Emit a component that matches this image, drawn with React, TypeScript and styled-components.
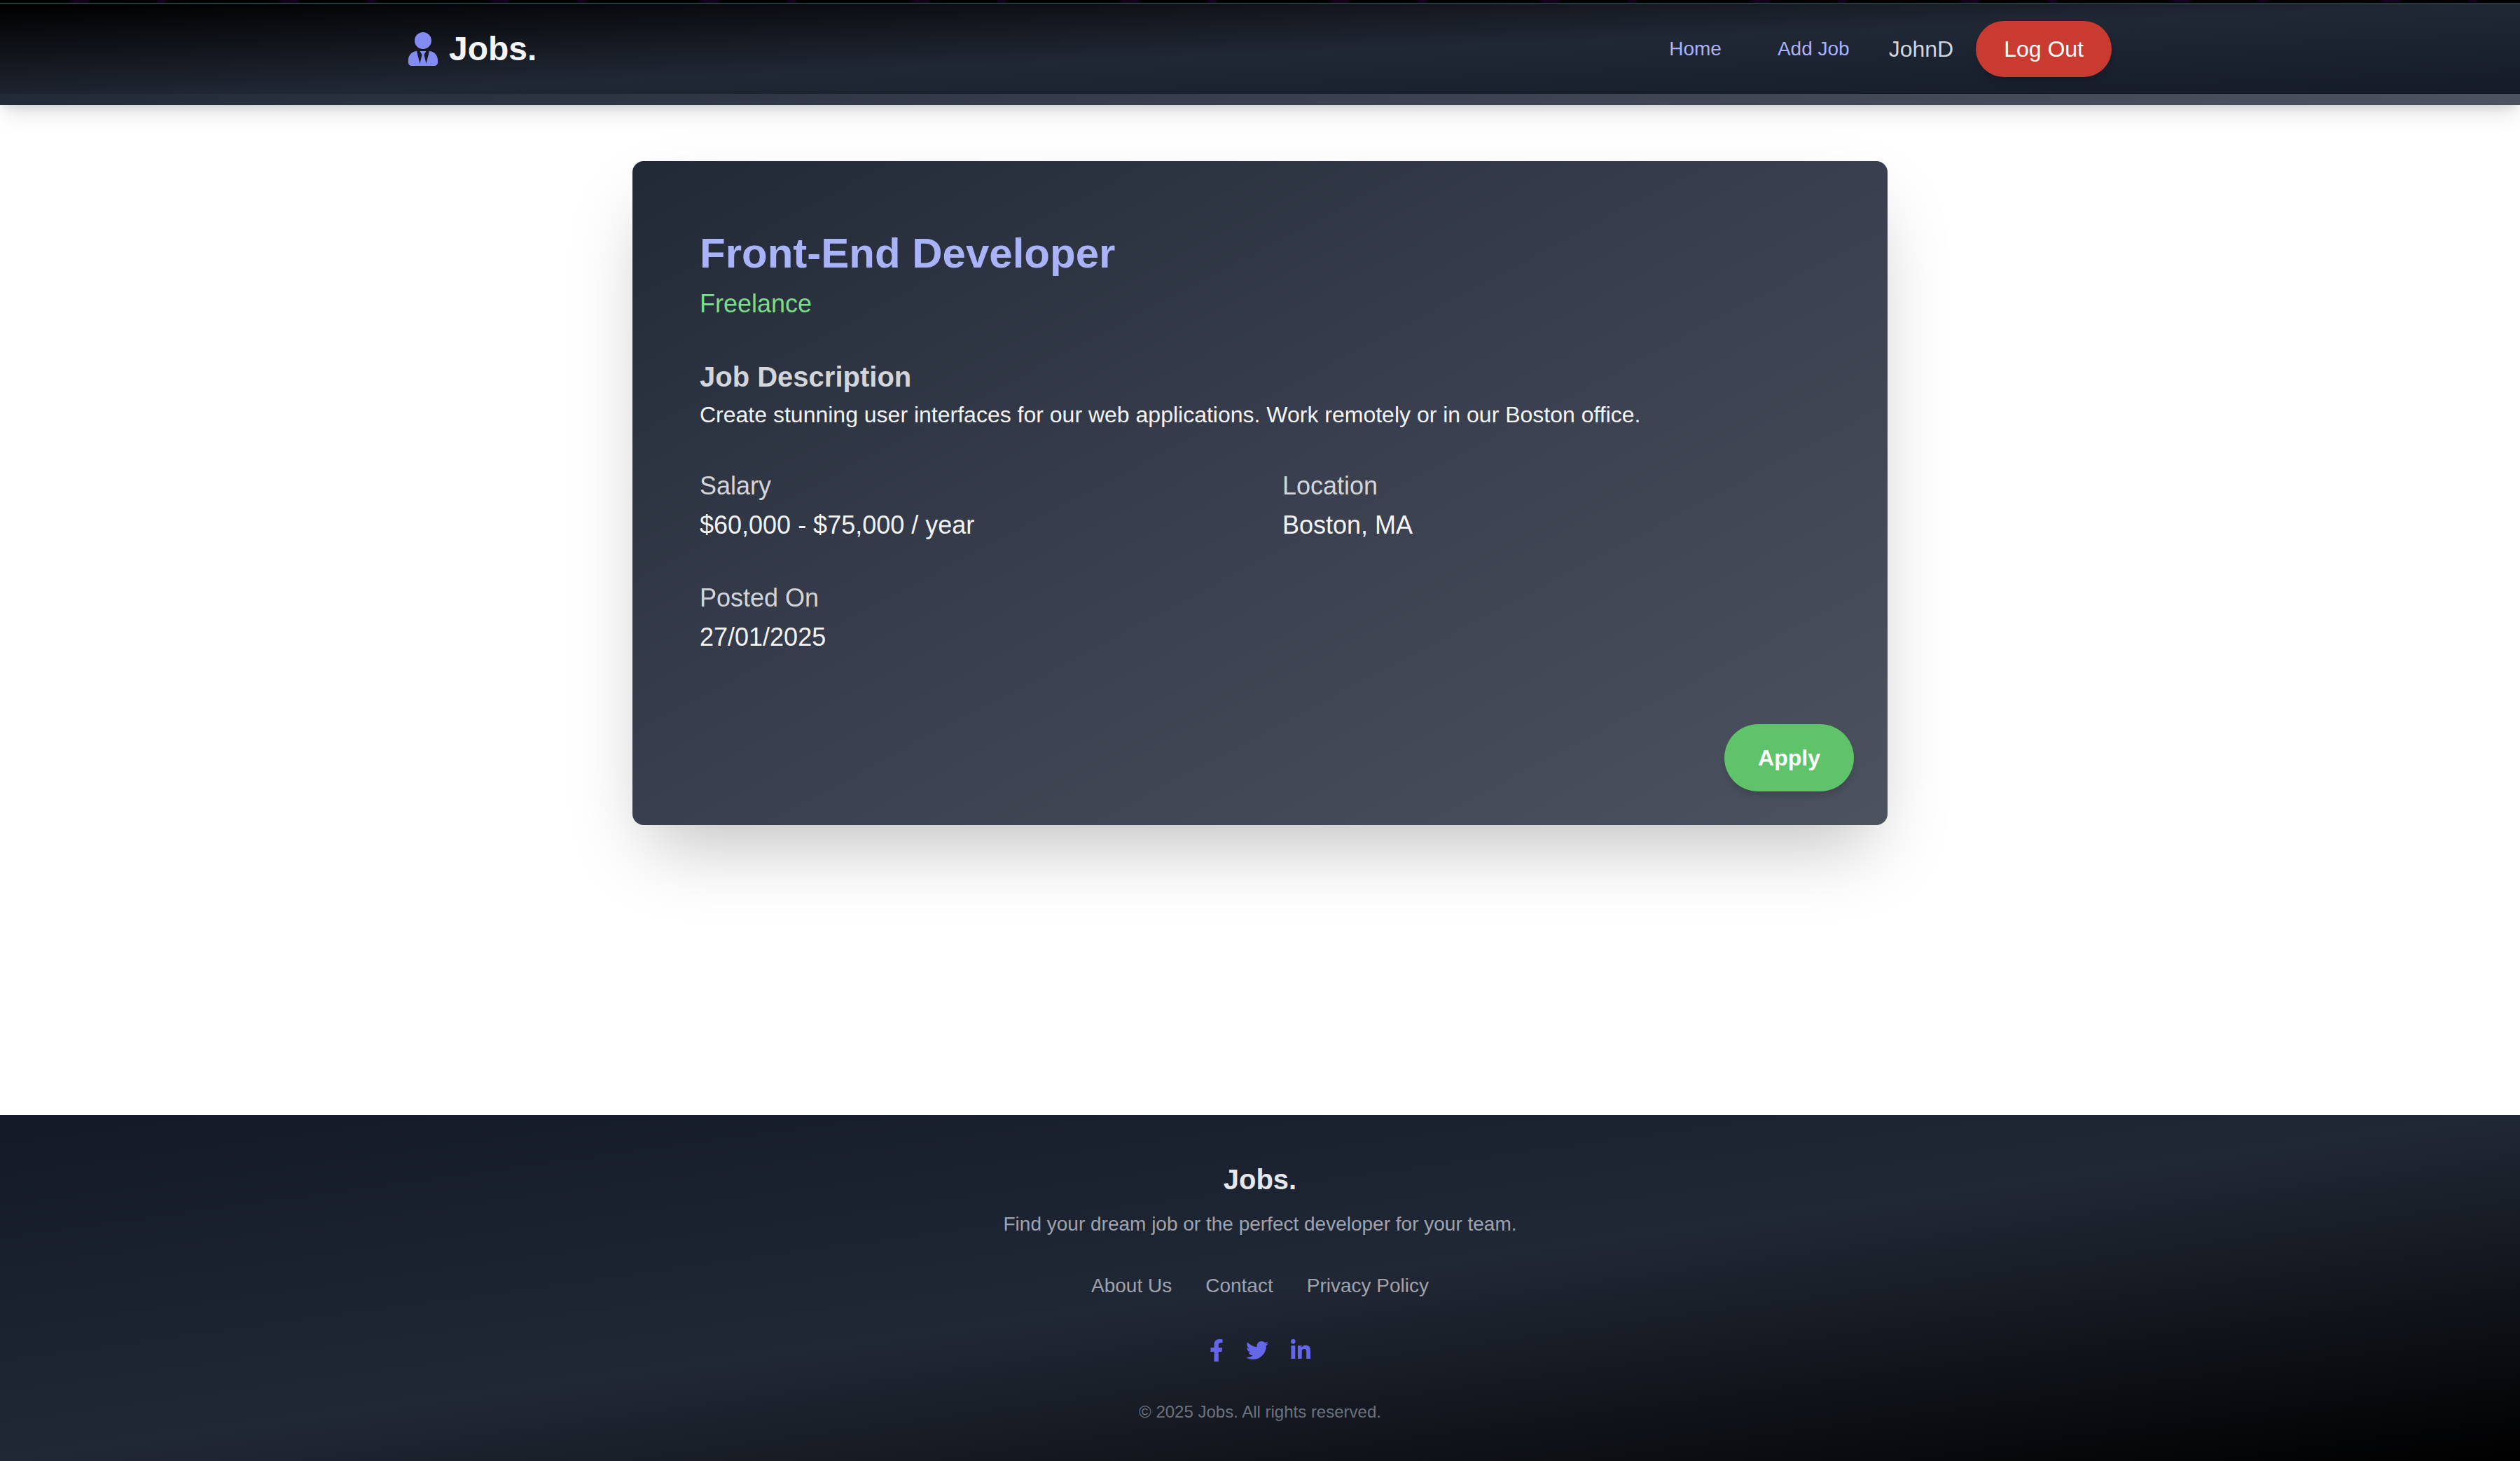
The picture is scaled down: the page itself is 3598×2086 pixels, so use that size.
import React from 'react';
import styled, { createGlobalStyle } from 'styled-components';
import { FaUserTie, FaFacebookF, FaTwitter, FaLinkedinIn } from 'react-icons/fa';

const GlobalStyle = createGlobalStyle`
  *, *::before, *::after { box-sizing: border-box; }
  body {
    margin: 0;
    background: #ffffff;
    font-family: "Liberation Sans", Arial, Helvetica, sans-serif;
    font-size: 32px;
    line-height: 48px;
  }
  h1, h2, p, dl, dt, dd { margin: 0; }
  a { text-decoration: none; }
  button { font-family: inherit; cursor: pointer; border: 0; }
`;

const Page = styled.div`
  display: flex;
  flex-direction: column;
  min-height: 100vh;
`;

const TopStrip = styled.div`
  height: 6px;
  background: repeating-linear-gradient(
    to right,
    #000000 0 96px,
    #12001c 104px 124px,
    #000000 130px 222px,
    #12001c 226px 234px,
    #000000 240px 300px
  );
  border-bottom: 2px solid #2a3939;
`;

const Header = styled.header`
  background: linear-gradient(to bottom right, #000000, #212835, #131926);
  box-shadow: 0 20px 30px -6px rgba(0, 0, 0, 0.1), 0 8px 12px -4px rgba(0, 0, 0, 0.1);
`;

const HeaderInner = styled.div`
  display: flex;
  align-items: center;
  justify-content: space-between;
  max-width: 2560px;
  height: 128px;
  margin: 0 auto;
  padding: 0 64px;
`;

const HeaderBar = styled.div`
  height: 16px;
  background: linear-gradient(to right, #232a37, #393f4e, #4d525f);
`;

const Brand = styled.a`
  display: flex;
  align-items: center;
  gap: 16px;
  color: #f3f4f6;
  font-size: 48px;
  font-weight: 700;
  line-height: 64px;

  svg {
    width: 42px;
    height: 48px;
    color: #838cf1;
  }
`;

const Nav = styled.nav`
  display: flex;
  align-items: center;
  gap: 32px;
`;

const NavLink = styled.a`
  padding: 16px 24px;
  color: #a9b3f8;
  font-size: 28px;
  line-height: 40px;
`;

const UserName = styled.span`
  color: #d2d5da;
`;

const PillButton = styled.button<{ $tone: 'danger' | 'success' }>`
  padding: ${({ $tone }) => ($tone === 'danger' ? '16px 40px' : '24px 48px')};
  border-radius: 9999px;
  background: ${({ $tone }) => ($tone === 'danger' ? '#c93a31' : '#5fc369')};
  color: #ffffff;
  font-size: 32px;
  font-weight: ${({ $tone }) => ($tone === 'danger' ? 400 : 700)};
  line-height: 48px;
  box-shadow: 0 8px 12px -2px rgba(0, 0, 0, 0.1), 0 4px 8px -4px rgba(0, 0, 0, 0.1);
`;

const Main = styled.main`
  flex: 1;
  padding: 80px 64px;
`;

const Card = styled.article`
  max-width: 1792px;
  margin: 0 auto;
  padding: 96px 48px 48px;
  border-radius: 16px;
  background: linear-gradient(to bottom right, #222936, #393f4e, #4d525f);
  box-shadow: 0 50px 100px -24px rgba(0, 0, 0, 0.25);
`;

const CardBody = styled.div`
  display: flex;
  flex-direction: column;
  gap: 48px;
  padding: 0 48px;
`;

const JobTitle = styled.h1`
  color: #a9b3f8;
  font-size: 60px;
  line-height: 72px;
`;

const JobType = styled.p`
  margin-top: 8px;
  color: #79dd8a;
  font-size: 36px;
  line-height: 56px;
`;

const SectionTitle = styled.h2`
  color: #d2d5da;
  font-size: 40px;
  line-height: 56px;
`;

const Description = styled.p`
  color: #f3f4f6;
  line-height: 52px;
`;

const Facts = styled.dl`
  display: grid;
  grid-template-columns: 1fr 1fr;
  gap: 48px 64px;
  font-size: 36px;
  line-height: 56px;
`;

const FactLabel = styled.dt`
  color: #d2d5da;
`;

const FactValue = styled.dd`
  color: #f3f4f6;
`;

const Actions = styled.div`
  display: flex;
  justify-content: flex-end;
  margin-top: 96px;
`;

const Footer = styled.footer`
  display: flex;
  flex-direction: column;
  align-items: center;
  gap: 48px;
  padding: 64px 64px 54px;
  background: linear-gradient(to bottom right, #131926, #212835, #000000);
  color: #9ea3ae;
  font-size: 28px;
  line-height: 40px;
  text-align: center;
`;

const FooterTitle = styled.h2`
  margin-bottom: 16px;
  color: #e5e7eb;
  font-size: 40px;
  line-height: 56px;
`;

const FooterLinks = styled.nav`
  display: flex;
  gap: 48px;

  a { color: inherit; }
`;

const SocialLinks = styled.div`
  display: flex;
  align-items: center;
  gap: 32px;
  height: 48px;
`;

const SocialLink = styled.a<{ $width: number }>`
  display: flex;
  color: #6467ea;

  svg {
    width: ${({ $width }) => $width}px;
    height: 32px;
  }
`;

const Copyright = styled.p`
  color: #6d727f;
  font-size: 24px;
  line-height: 32px;
`;

const facts = [
  { label: 'Salary', value: '$60,000 - $75,000 / year' },
  { label: 'Location', value: 'Boston, MA' },
  { label: 'Posted On', value: '27/01/2025' },
];

const socials = [
  { name: 'Facebook', Icon: FaFacebookF, width: 20 },
  { name: 'Twitter', Icon: FaTwitter, width: 32 },
  { name: 'LinkedIn', Icon: FaLinkedinIn, width: 28 },
];

export default function App() {
  return (
    <>
      <GlobalStyle />
      <Page>
        <TopStrip />
        <Header>
          <HeaderInner>
            <Brand href="#">
              <FaUserTie />
              Jobs.
            </Brand>
            <Nav>
              <NavLink href="#">Home</NavLink>
              <NavLink href="#">Add Job</NavLink>
              <UserName>JohnD</UserName>
              <PillButton type="button" $tone="danger">Log Out</PillButton>
            </Nav>
          </HeaderInner>
          <HeaderBar />
        </Header>
        <Main>
          <Card>
            <CardBody>
              <div>
                <JobTitle>Front-End Developer</JobTitle>
                <JobType>Freelance</JobType>
              </div>
              <section>
                <SectionTitle>Job Description</SectionTitle>
                <Description>
                  Create stunning user interfaces for our web applications. Work remotely or in our Boston office.
                </Description>
              </section>
              <Facts>
                {facts.map(({ label, value }) => (
                  <div key={label}>
                    <FactLabel>{label}</FactLabel>
                    <FactValue>{value}</FactValue>
                  </div>
                ))}
              </Facts>
            </CardBody>
            <Actions>
              <PillButton type="button" $tone="success">Apply</PillButton>
            </Actions>
          </Card>
        </Main>
        <Footer>
          <div>
            <FooterTitle>Jobs.</FooterTitle>
            <p>Find your dream job or the perfect developer for your team.</p>
          </div>
          <FooterLinks>
            <a href="#">About Us</a>
            <a href="#">Contact</a>
            <a href="#">Privacy Policy</a>
          </FooterLinks>
          <SocialLinks>
            {socials.map(({ name, Icon, width }) => (
              <SocialLink key={name} href="#" aria-label={name} $width={width}>
                <Icon />
              </SocialLink>
            ))}
          </SocialLinks>
          <Copyright>© 2025 Jobs. All rights reserved.</Copyright>
        </Footer>
      </Page>
    </>
  );
}
